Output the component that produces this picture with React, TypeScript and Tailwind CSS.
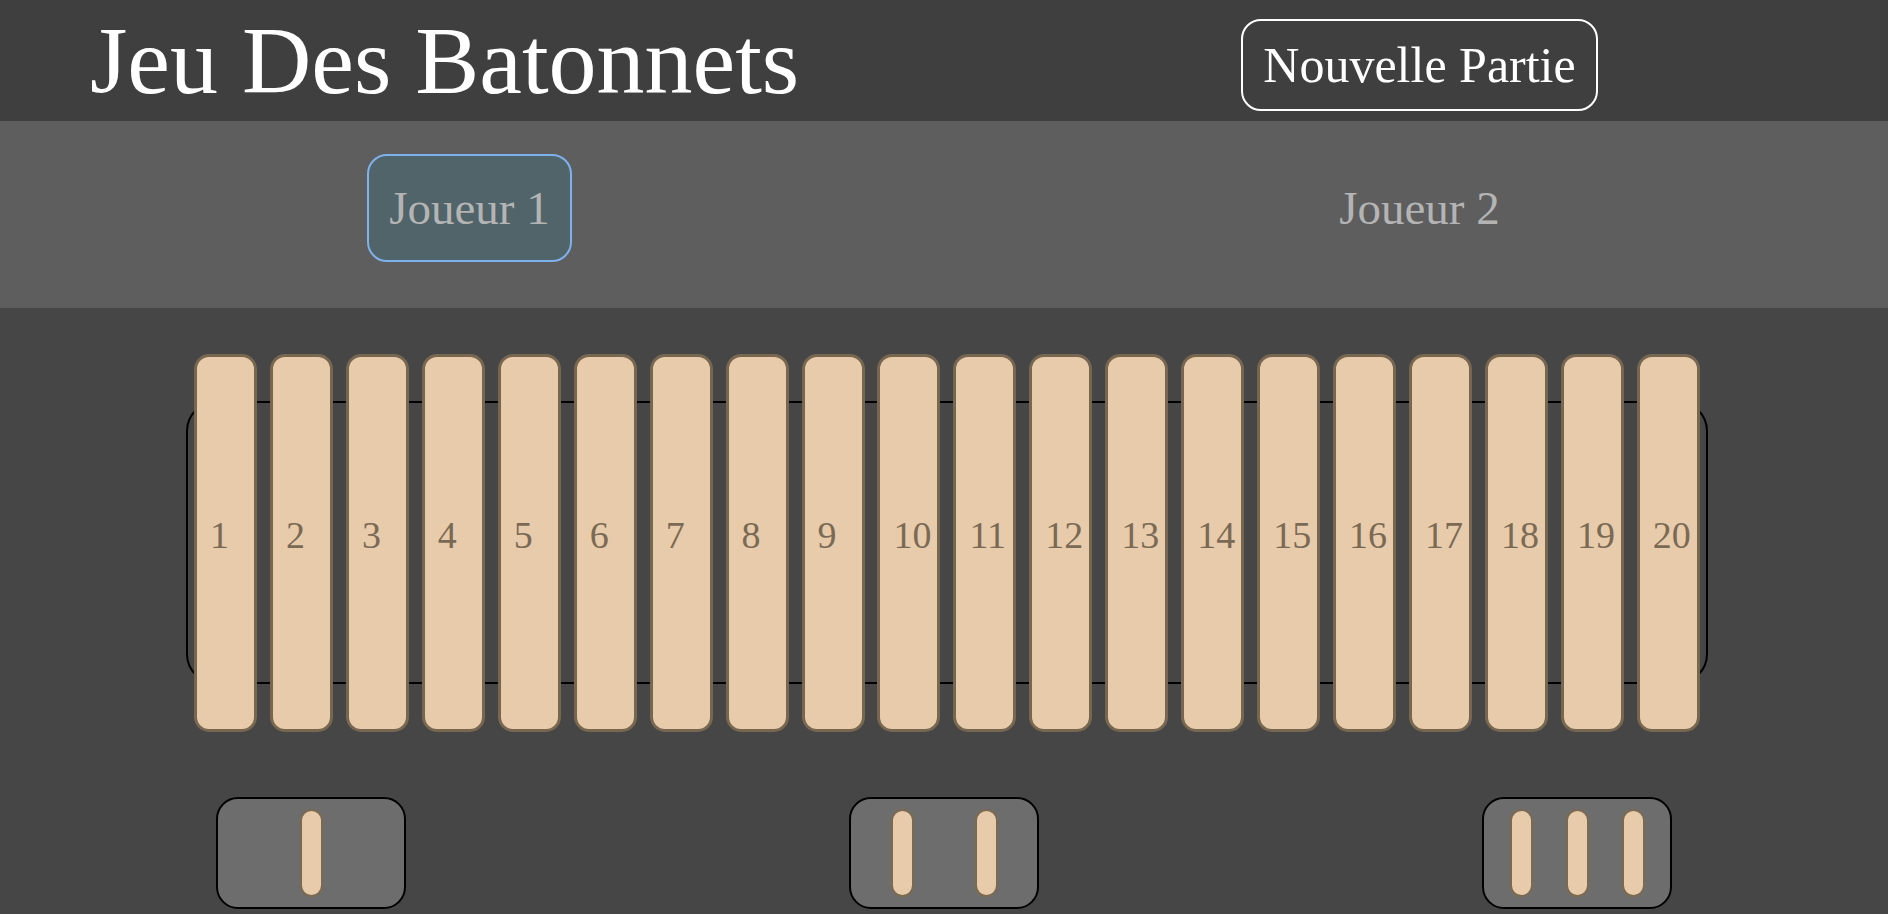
import React from 'react';

const Stick: React.FC<{ n: number }> = ({ n }) => (
  <div className="flex h-[378px] w-[63px] shrink-0 items-center rounded-[15px] border-[3px] border-[#776750] bg-[#e8cbaa] pb-[16px] pl-[13px] text-[38px] text-[#7a6a55]">
    {n}
  </div>
);

const MiniStick: React.FC = () => (
  <div className="h-[88px] w-[23px] rounded-full border-2 border-[#7a6a52] bg-[#e8cbaa]"></div>
);

const App: React.FC = () => {
  const sticks = Array.from({ length: 20 }, (_, i) => i + 1);
  const choices = [1, 2, 3];

  return (
    <div className="min-h-[914px] bg-[#464646] font-['Liberation_Serif',serif] leading-[normal]">
      {/* Header */}
      <header className="grid h-[121px] grid-cols-2 bg-[#3f3f3f]">
        <div className="flex items-center pl-[90px]">
          <h1 className="text-[96px] leading-[normal] text-white">Jeu Des Batonnets</h1>
        </div>
        <div className="flex items-start justify-center pl-[7px] pt-[19px]">
          <button className="rounded-[20px] border-2 border-white px-[20px] py-[15px] text-[50px] leading-[normal] text-white">
            Nouvelle Partie
          </button>
        </div>
      </header>

      {/* Players */}
      <div className="grid h-[187px] grid-cols-2 bg-[#5e5e5e] pt-[33px]">
        <div className="flex items-start justify-center pr-[5px]">
          <div className="rounded-[20px] border-2 border-[#7fb1ec] bg-[#50646a] px-[20px] py-[25px] text-[47px] leading-[normal] text-[#b4b4b4]">
            Joueur 1
          </div>
        </div>
        <div className="flex items-start justify-center pl-[7px]">
          <div className="rounded-[20px] border-2 border-transparent px-[20px] py-[25px] text-[47px] leading-[normal] text-[#b4b4b4]">
            Joueur 2
          </div>
        </div>
      </div>

      {/* Board */}
      <div className="ml-[186px] mt-[93px] flex h-[283px] w-[1522px] items-center justify-between rounded-[30px] border-2 border-black px-[6px]">
        {sticks.map((n) => (
          <Stick key={n} n={n} />
        ))}
      </div>

      {/* Choices */}
      <div className="mt-[113px] flex justify-center gap-[443px]">
        {choices.map((c) => (
          <button
            key={c}
            className="flex h-[112px] w-[190px] items-center justify-around rounded-[22px] border-2 border-black bg-[#6d6d6d] px-[9px] py-[10px]"
          >
            {Array.from({ length: c }, (_, i) => (
              <MiniStick key={i} />
            ))}
          </button>
        ))}
      </div>
    </div>
  );
};

export default App;
